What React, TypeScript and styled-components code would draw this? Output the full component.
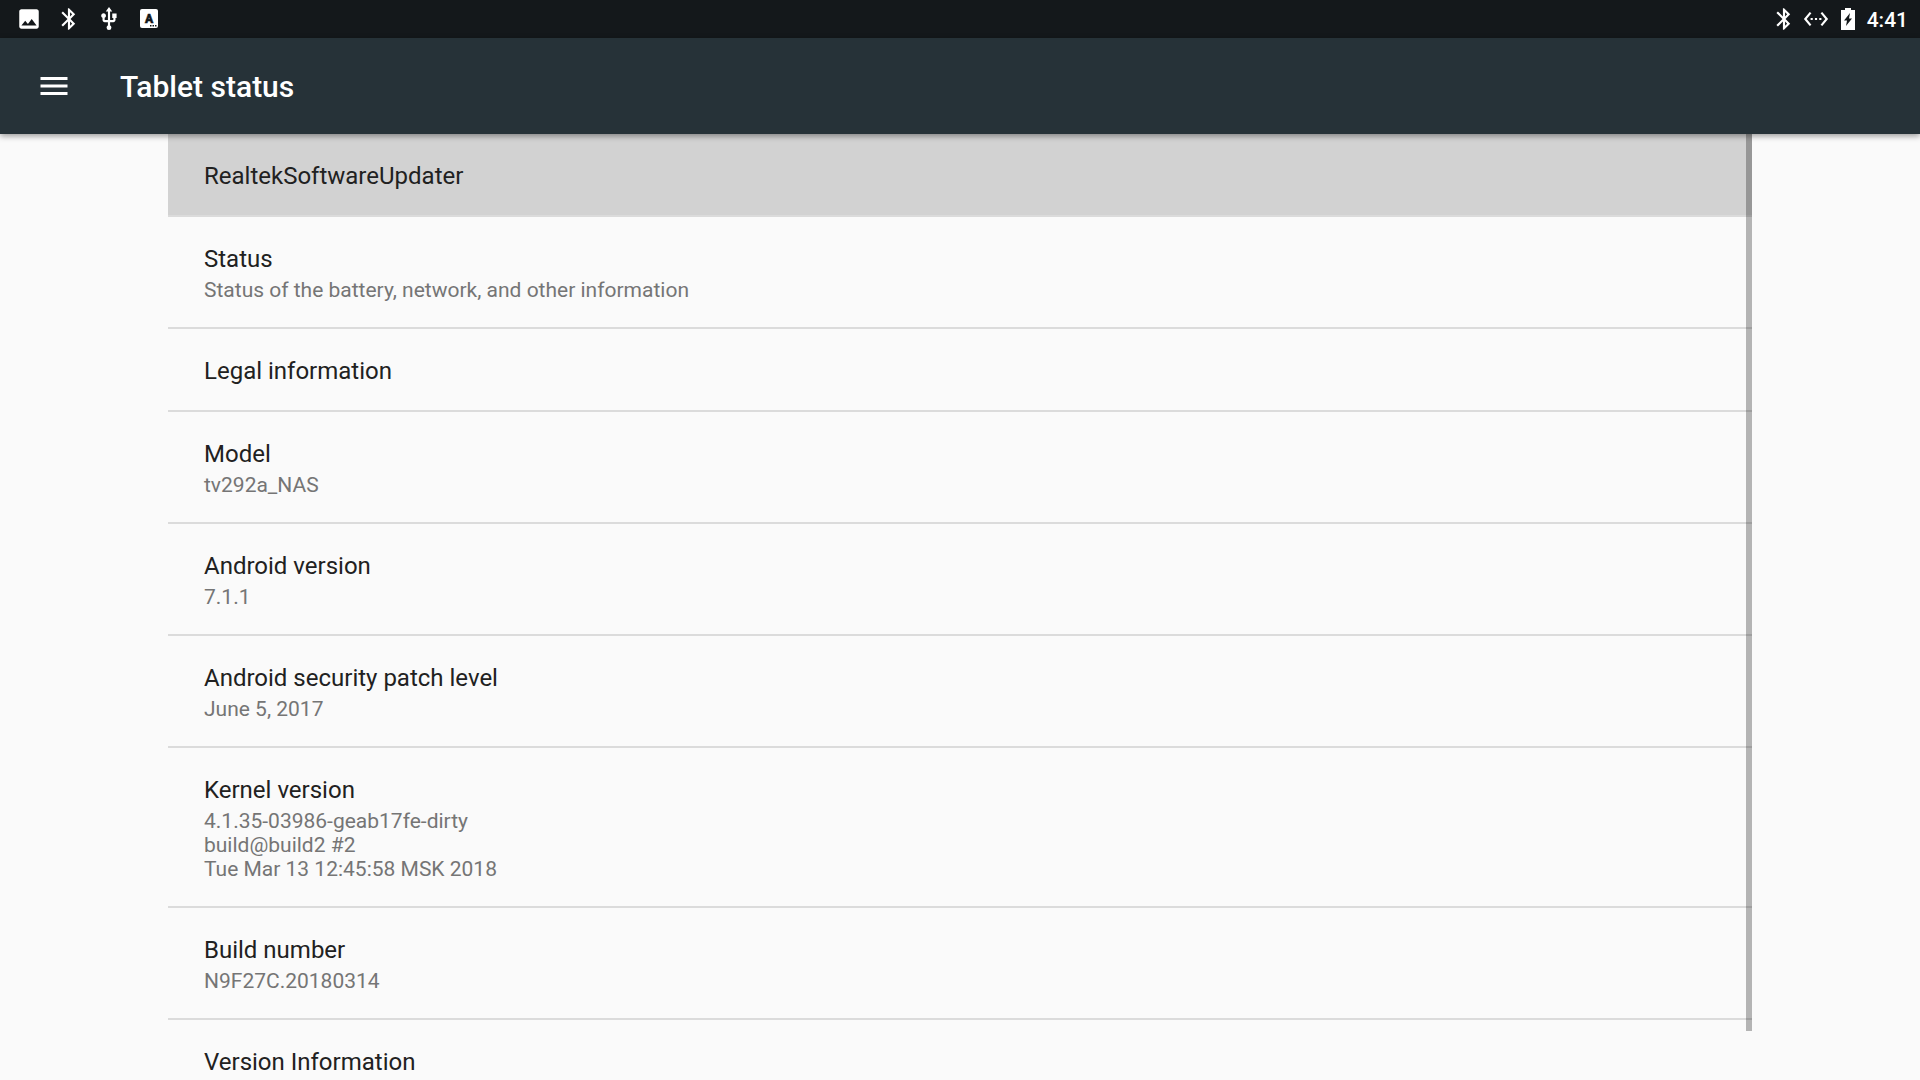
import React from "react";
import styled, { createGlobalStyle } from "styled-components";
import { MdBluetooth, MdImage, MdMenu, MdSettingsEthernet, MdUsb } from "react-icons/md";

const GlobalStyle = createGlobalStyle`
  *, *::before, *::after { box-sizing: border-box; }
  body {
    margin: 0;
    background: #fafafa;
    font-family: Roboto, "Noto Sans", sans-serif;
  }
`;

const Screen = styled.div`
  display: flex;
  flex-direction: column;
  height: 100vh;
  overflow: hidden;
`;

const StatusBar = styled.div`
  display: flex;
  align-items: center;
  justify-content: space-between;
  flex: none;
  height: 38px;
  padding: 0 12px 0 16px;
  background: #14181b;
  color: #fff;
`;

const IconGroup = styled.div<{ $gap: number }>`
  display: flex;
  align-items: center;
  gap: ${(p) => p.$gap}px;

  svg { display: block; }
`;

const Clock = styled.time`
  padding-top: 2px;
  font-size: 21px;
  line-height: 24px;
  font-weight: 500;
`;

const AppBar = styled.header`
  position: relative;
  z-index: 1;
  display: flex;
  align-items: center;
  flex: none;
  gap: 48px;
  height: 96px;
  padding: 0 36px;
  background: #263238;
  color: #fff;
  box-shadow: 0 2px 6px rgba(0, 0, 0, 0.4);
`;

const MenuButton = styled.button`
  display: flex;
  padding: 0;
  border: 0;
  background: none;
  color: inherit;
`;

const Title = styled.h1`
  margin: 0;
  padding-top: 2px;
  font-size: 30px;
  line-height: 36px;
  font-weight: 500;
`;

const Content = styled.main`
  flex: 1;
  min-height: 0;
  padding: 0 168px;
`;

const ListPane = styled.div`
  position: relative;
  height: 100%;
  overflow: hidden;
`;

const List = styled.ul`
  margin: 0;
  padding: 0;
  list-style: none;
`;

const Item = styled.li`
  border-bottom: 2px solid #dbdbdb;
`;

const Row = styled.button<{ $pressed: boolean }>`
  display: block;
  width: 100%;
  padding: 26px 36px 22px;
  border: 0;
  background: ${(p) => (p.$pressed ? "#d2d2d2" : "transparent")};
  font-family: inherit;
  text-align: left;
`;

const RowTitle = styled.span`
  display: block;
  font-size: 24px;
  line-height: 33px;
  color: #212121;
`;

const Summary = styled.span`
  display: block;
  padding: 2px 0 3px;
  font-size: 21px;
  line-height: 24px;
  color: #757575;
  white-space: pre-line;
`;

const ScrollThumb = styled.div`
  position: absolute;
  top: 0;
  right: 0;
  width: 6px;
  height: 94.8%;
  background: rgba(0, 0, 0, 0.28);
`;

const KeyboardIcon = () => (
  <svg width="26" height="26" viewBox="0 0 26 26" aria-hidden="true">
    <rect x="4" y="3" width="18" height="19" rx="2" fill="#fff" />
    <text
      x="13"
      y="16.500"
      textAnchor="middle"
      fontSize="12"
      fontWeight="900"
      fill="#14181b"
      stroke="#14181b"
      strokeWidth="0.5"
    >
      A
    </text>
    <path d="M14 19h1.500v1.500H14zM16.500 19H18v1.500h-1.500zM19 19h1.500v1.500H19z" fill="#14181b" />
  </svg>
);

const BatteryIcon = () => (
  <svg width="14" height="22" viewBox="0 0 14 22" aria-hidden="true">
    <path fill="#fff" fillRule="evenodd" d="M4 0h6v2h4v20H0V2h4zM9 5L3 12.500h3L5 18l6-7.500H8z" />
  </svg>
);

const entries = [
  { title: "RealtekSoftwareUpdater", pressed: true },
  { title: "Status", summary: "Status of the battery, network, and other information" },
  { title: "Legal information" },
  { title: "Model", summary: "tv292a_NAS" },
  { title: "Android version", summary: "7.1.1" },
  { title: "Android security patch level", summary: "June 5, 2017" },
  {
    title: "Kernel version",
    summary: "4.1.35-03986-geab17fe-dirty\nbuild@build2 #2\nTue Mar 13 12:45:58 MSK 2018",
  },
  { title: "Build number", summary: "N9F27C.20180314" },
  { title: "Version Information" },
];

export default function App() {
  return (
    <Screen>
      <GlobalStyle />
      <StatusBar>
        <IconGroup $gap={14}>
          <MdImage size={26} />
          <MdBluetooth size={26} />
          <MdUsb size={26} />
          <KeyboardIcon />
        </IconGroup>
        <IconGroup $gap={12}>
          <IconGroup $gap={6}>
            <MdBluetooth size={26} />
            <MdSettingsEthernet size={26} />
          </IconGroup>
          <BatteryIcon />
          <Clock>4:41</Clock>
        </IconGroup>
      </StatusBar>
      <AppBar>
        <MenuButton type="button" aria-label="Open navigation">
          <MdMenu size={36} />
        </MenuButton>
        <Title>Tablet status</Title>
      </AppBar>
      <Content>
        <ListPane>
          <List>
            {entries.map((entry) => (
              <Item key={entry.title}>
                <Row type="button" $pressed={Boolean(entry.pressed)}>
                  <RowTitle>{entry.title}</RowTitle>
                  {entry.summary && <Summary>{entry.summary}</Summary>}
                </Row>
              </Item>
            ))}
          </List>
          <ScrollThumb />
        </ListPane>
      </Content>
    </Screen>
  );
}
